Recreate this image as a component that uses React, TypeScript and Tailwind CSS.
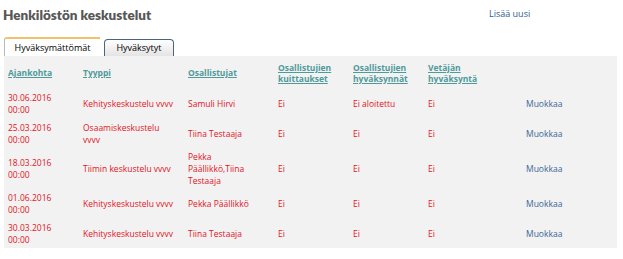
import React from "react";

type Row = {
  date: string;
  time: string;
  type: string;
  people: string;
  ack: string;
  approvals: string;
  lead: string;
  h: string;
};

const rows: Row[] = [
  { date: "30.06.2016", time: "00:00", type: "Kehityskeskustelu vvvv", people: "Samuli Hirvi", ack: "Ei", approvals: "Ei aloitettu", lead: "Ei", h: "h-[30px]" },
  { date: "25.03.2016", time: "00:00", type: "Osaamiskeskustelu vvvv", people: "Tiina Testaaja", ack: "Ei", approvals: "Ei", lead: "Ei", h: "h-[30px]" },
  { date: "18.03.2016", time: "00:00", type: "Tiimin keskustelu vvvv", people: "Pekka Päällikkö,Tiina Testaaja", ack: "Ei", approvals: "Ei", lead: "Ei", h: "h-[40px]" },
  { date: "01.06.2016", time: "00:00", type: "Kehityskeskustelu vvvv", people: "Pekka Päällikkö", ack: "Ei", approvals: "Ei", lead: "Ei", h: "h-[30px]" },
  { date: "30.03.2016", time: "00:00", type: "Kehityskeskustelu vvvv", people: "Tiina Testaaja", ack: "Ei", approvals: "Ei", lead: "Ei", h: "h-[29px]" },
];

const headers = [
  "Ajankohta",
  "Tyyppi",
  "Osallistujat",
  "Osallistujien kuittaukset",
  "Osallistujien hyväksynnät",
  "Vetäjän hyväksyntä",
];

export default function App() {
  return (
    <div className="w-[623px] h-[259px] bg-white font-['Open_Sans',sans-serif] text-[8.5px] leading-[12px]">
      <div className="flex items-start">
        <h1 className="ml-[3px] mt-[7px] w-[486px] font-['Lato',sans-serif] text-[13.5px] leading-[16px] font-extrabold text-[#575757]">
          Henkilöstön keskustelut
        </h1>
        <a className="mt-[8px] text-[9px] text-[#2e5b8c]">Lisää uusi</a>
      </div>

      {/* tabs */}
      <div className="ml-1 mt-[14px] flex items-end gap-[4px] h-[19px]">
        <div className="h-[19px] w-[96px] bg-white border-t-2 border-l border-t-[#f0c36a] border-l-[#b8b8b8] rounded-tl-[3px] flex items-center justify-center text-[9px] text-black">
          Hyväksymättömät
        </div>
        <div className="h-[17px] w-[70px] bg-gradient-to-b from-white to-[#e4e4e4] border border-b-0 border-[#4a6582] rounded-t-[4px] flex items-center justify-center text-[9px] text-black">
          Hyväksytyt
        </div>
      </div>

      {/* panel */}
      <div className="ml-1 mr-[6px] bg-[#f2f2f2]">
        <table className="w-full table-fixed border-collapse">
          <colgroup>
            <col className="w-[75px]" />
            <col className="w-[105px]" />
            <col className="w-[90px]" />
            <col className="w-[75px]" />
            <col className="w-[75px]" />
            <col className="w-[98px]" />
            <col />
          </colgroup>
          <thead>
            <tr className="h-[33px]">
              {headers.map((h) => (
                <th
                  key={h}
                  className="pl-1 pr-1 text-left align-middle font-bold text-[#4f9a9a] underline leading-[11px]"
                >
                  <span className="block max-w-[62px]">{h}</span>
                </th>
              ))}
              <th />
            </tr>
          </thead>
          <tbody className="text-[#e3141f]">
            {rows.map((r, i) => (
              <tr key={i} className={r.h}>
                <td className="pl-1 align-middle">
                  {r.date}
                  <br />
                  {r.time}
                </td>
                <td className="pl-1 pr-2 align-middle">{r.type}</td>
                <td className="pl-1 pr-2 align-middle">{r.people}</td>
                <td className="pl-1 align-middle">{r.ack}</td>
                <td className="pl-1 align-middle">{r.approvals}</td>
                <td className="pl-1 align-middle">{r.lead}</td>
                <td className="pl-1 align-middle text-[#3b6798]">Muokkaa</td>
              </tr>
            ))}
          </tbody>
        </table>
      </div>
    </div>
  );
}
